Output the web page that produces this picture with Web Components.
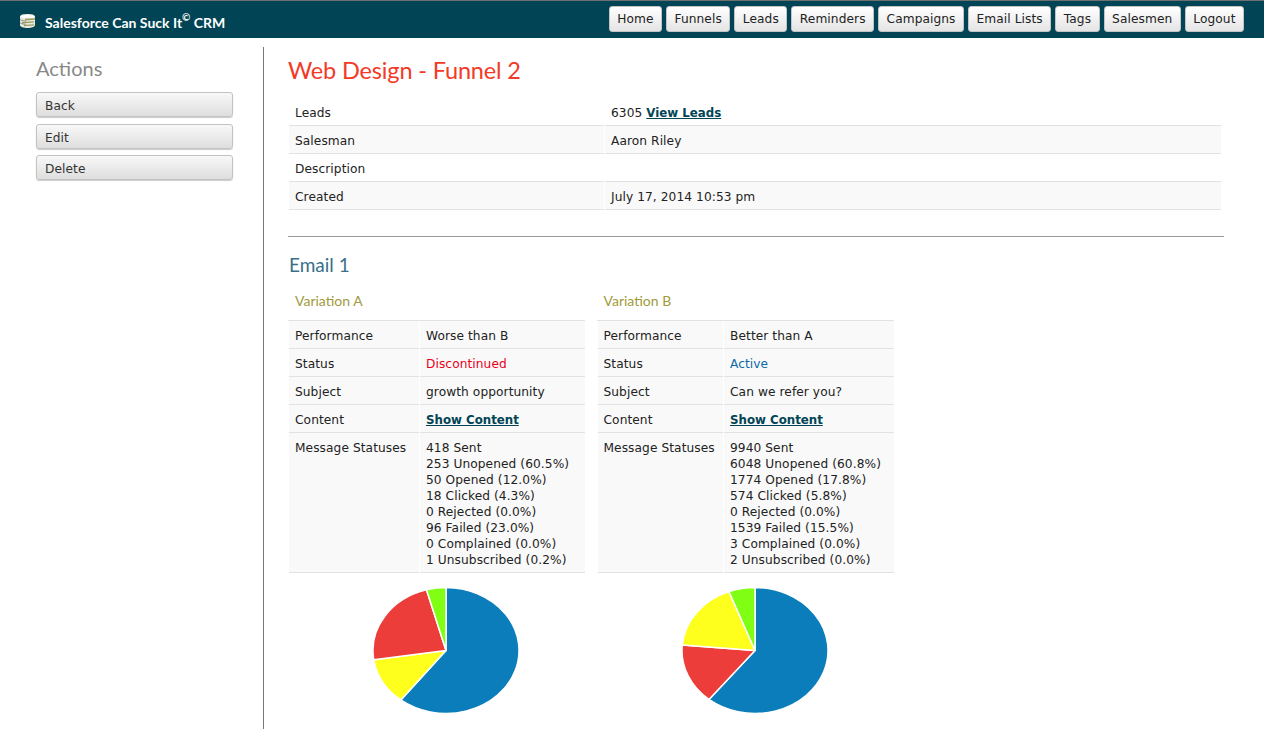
<!DOCTYPE html>
<html>
<head>
<meta charset="utf-8">
<title>Web Design - Funnel 2</title>
<style>
    html, body { height: 100%; margin: 0; overflow: hidden; }
    body { background: #fff; color: #222; font-family: "DejaVu Sans", sans-serif; font-size: 12.2px; letter-spacing: .08px; }
</style>
</head>
<body>
<crm-app>
    <crm-header slot="header" brand="Salesforce Can Suck It">
        <crm-button>Home</crm-button>
        <crm-button>Funnels</crm-button>
        <crm-button>Leads</crm-button>
        <crm-button>Reminders</crm-button>
        <crm-button>Campaigns</crm-button>
        <crm-button>Email Lists</crm-button>
        <crm-button>Tags</crm-button>
        <crm-button>Salesmen</crm-button>
        <crm-button>Logout</crm-button>
    </crm-header>
    <crm-sidebar slot="sidebar" title="Actions">
        <crm-action>Back</crm-action>
        <crm-action>Edit</crm-action>
        <crm-action>Delete</crm-action>
    </crm-sidebar>
    <crm-funnel title="Web Design - Funnel 2">
        <crm-row label="Leads" slot="info" width="315">6305 <crm-link>View Leads</crm-link></crm-row>
        <crm-row label="Salesman" slot="info" width="315" shaded>Aaron Riley</crm-row>
        <crm-row label="Description" slot="info" width="315"></crm-row>
        <crm-row label="Created" slot="info" width="315" shaded>July 17, 2014 10:53 pm</crm-row>
        <crm-variation slot="variations" title="Variation A" data="60.5,#0b7dbb 12,#ffff1e 23,#ec3d3b 4.3,#80ff14">
            <crm-row label="Performance" width="130" shaded>Worse than B</crm-row>
            <crm-row label="Status" width="130" shaded><span style="color:#e8001c">Discontinued</span></crm-row>
            <crm-row label="Subject" width="130" shaded>growth opportunity</crm-row>
            <crm-row label="Content" width="130" shaded><crm-link>Show Content</crm-link></crm-row>
            <crm-row label="Message Statuses" width="130" shaded>418 Sent<br>253 Unopened (60.5%)<br>50 Opened (12.0%)<br>18 Clicked (4.3%)<br>0 Rejected (0.0%)<br>96 Failed (23.0%)<br>0 Complained (0.0%)<br>1 Unsubscribed (0.2%)</crm-row>
        </crm-variation>
        <crm-variation slot="variations" title="Variation B" data="60.8,#0b7dbb 15.5,#ec3d3b 17.8,#ffff1e 5.8,#80ff14">
            <crm-row label="Performance" width="125.500" shaded>Better than A</crm-row>
            <crm-row label="Status" width="125.500" shaded><span style="color:#0b6aa8">Active</span></crm-row>
            <crm-row label="Subject" width="125.500" shaded>Can we refer you?</crm-row>
            <crm-row label="Content" width="125.500" shaded><crm-link>Show Content</crm-link></crm-row>
            <crm-row label="Message Statuses" width="125.500" shaded>9940 Sent<br>6048 Unopened (60.8%)<br>1774 Opened (17.8%)<br>574 Clicked (5.8%)<br>0 Rejected (0.0%)<br>1539 Failed (15.5%)<br>3 Complained (0.0%)<br>2 Unsubscribed (0.0%)</crm-row>
        </crm-variation>
    </crm-funnel>
</crm-app>

<script>
const headingFont = `Lato, "Open Sans", sans-serif`;

// small helper, every element just sets its html once
class Base extends HTMLElement {
    constructor() {
        super();
        this.attachShadow({ mode: "open" });
    }
    connectedCallback() {
        this.shadowRoot.innerHTML = this.html();
    }
}

class CrmApp extends Base {
    html() {
        return `<style>
            :host { display: flex; flex-direction: column; height: 100vh; }
            .body { display: flex; flex: 1; min-height: 0; padding-top: 9px; }
            main { flex: 1; min-width: 0; }
        </style>
        <slot name="header"></slot>
        <div class="body">
            <slot name="sidebar"></slot>
            <main><slot></slot></main>
        </div>`;
    }
}

class CrmHeader extends Base {
    html() {
        return `<style>
            :host { display: flex; align-items: center; justify-content: space-between; box-sizing: border-box; height: 38px; padding: 0 20px 0 19px; background: #004455; border-top: 1px solid #6f6f6f; }
            .brand { display: flex; align-items: center; color: #fff; font: 700 14px ${headingFont}; letter-spacing: 0; }
            svg { margin: 2px 9px 0 0; }
            span { padding-top: 6px; }
            sup { font-size: 10px; line-height: 0; position: relative; top: -1px; vertical-align: super; }
            nav { display: flex; gap: 4px; }
        </style>
        <div class="brand">
            <svg width="17" height="16" viewBox="0 0 17 16">
                <path d="M1 3.500C1 1.800 4.500 1 8.500 1S16 1.800 16 3.500V12C16 14 12.500 15 8.500 15S1 14 1 12Z" fill="#e9e9df"/>
                <path d="M1 3.500C3 5.500 13 5.500 16 3.500C13 1.500 3 1.500 1 3.500Z" fill="#fff"/>
                <path d="M6 5.800 16 5.200V6.800L6 7.500ZM3 9 15 8.300V9.500L3 10.500ZM5 12 15 11.200V12.400L5 13.300Z" fill="#9c9f5e"/>
                <path d="M1 6.500C3 8 5 8 7 8M1 9.800C3 11 5 11.300 7 11.300" stroke="#6d7a73" stroke-width=".8" fill="none"/>
            </svg>
            <span>${this.getAttribute("brand")}<sup>©</sup> CRM</span>
        </div>
        <nav><slot></slot></nav>`;
    }
}

class CrmButton extends Base {
    html() {
        return `<style>
            :host { display: block; }
            a { display: block; box-sizing: border-box; height: 26px; line-height: 24px; padding: 0 7.500px; margin-top: -1px; color: #222; font-size: 12.200px; border: 1px solid #c4c4c4; border-radius: 3px; background: linear-gradient(#fff, #e4e4e4); }
        </style>
        <a><slot></slot></a>`;
    }
}

class CrmSidebar extends Base {
    html() {
        return `<style>
            :host { display: block; box-sizing: border-box; width: 264px; height: 100%; padding: 8px 30px 0 36px; border-right: 1px solid #777; }
            h2 { margin: 0 0 11px; color: #888; font: 400 20px/26px ${headingFont}; letter-spacing: 0; }
            .list { display: flex; flex-direction: column; gap: 6.500px; }
        </style>
        <h2>${this.getAttribute("title")}</h2>
        <div class="list"><slot></slot></div>`;
    }
}

class CrmAction extends Base {
    html() {
        return `<style>
            :host { display: block; }
            a { display: block; box-sizing: border-box; height: 25px; line-height: 24px; padding: 1px 8px 0; color: #333; border: 1px solid #c2c2c2; border-radius: 3px; background: linear-gradient(#f8f8f8, #dedede); box-shadow: 0 1px 1px rgba(0,0,0,.2); }
        </style>
        <a><slot></slot></a>`;
    }
}

class CrmFunnel extends Base {
    html() {
        return `<style>
            :host { display: block; padding: 8px 40px 0 24px; }
            h1 { margin: 0 0 13px; color: #f33a26; font: 400 23.500px/30px ${headingFont}; letter-spacing: -.15px; }
            .info { padding-right: 3px; }
            hr { height: 0; margin: 26px 0 15px; border: 0; border-top: 1px solid #999; }
            h2 { margin: 0 0 11px 1px; color: #3a6f8a; font: 400 19px/26px ${headingFont}; letter-spacing: 0; }
            .variations { display: flex; gap: 11.500px; }
        </style>
        <h1>${this.getAttribute("title")}</h1>
        <div class="info"><slot name="info"></slot></div>
        <hr>
        <h2>Email 1</h2>
        <div class="variations"><slot name="variations"></slot></div>`;
    }
}

class CrmRow extends Base {
    html() {
        return `<style>
            :host { display: flex; margin-left: 1px; line-height: 16px; }
            div { box-sizing: border-box; padding: 7px 6px 4px; border-bottom: 1px solid #e2e2e2; min-height: 28px; }
            .label { flex: none; width: ${this.getAttribute("width")}px; margin-right: 1px; }
            .value { flex: 1; min-width: 0; }
            :host([shaded]) div { background: #f9f9f9; }
        </style>
        <div class="label">${this.getAttribute("label")}</div>
        <div class="value"><slot></slot></div>`;
    }
}

class CrmLink extends Base {
    html() {
        return `<style>
            :host { display: inline; }
            a { color: #004455; font-size: 11.800px; font-weight: 700; letter-spacing: 0; text-decoration: underline; }
        </style>
        <a><slot></slot></a>`;
    }
}

class CrmVariation extends Base {
    html() {
        return `<style>
            :host { display: block; width: 297px; }
            h3 { margin: 0; height: 31px; padding: 4px 0 0 7px; color: #a19a3c; font: 400 14px/16px ${headingFont}; letter-spacing: 0; box-sizing: border-box; }
            .rows { border-top: 1px solid #e2e2e2; }
            crm-pie { margin-top: 14px; }
        </style>
        <h3>${this.getAttribute("title")}</h3>
        <div class="rows"><slot></slot></div>
        <crm-pie data="${this.getAttribute("data")}"></crm-pie>`;
    }
}

// pie was a canvas stretched sideways in the original, so compute on an ellipse
class CrmPie extends Base {
    html() {
        const rx = 73, ry = 63, cx = 74, cy = 63.500;
        const parts = this.getAttribute("data").split(" ").map(p => p.split(","));
        const total = parts.reduce((sum, p) => sum + parseFloat(p[0]), 0);
        let angle = 0;
        const slices = parts.map(([value, color]) => {
            const start = angle;
            angle += parseFloat(value) / total * Math.PI * 2;
            const point = a => `${(cx + rx * Math.sin(a)).toFixed(2)} ${(cy - ry * Math.cos(a)).toFixed(2)}`;
            const large = angle - start > Math.PI ? 1 : 0;
            return `<path d="M${cx} ${cy}L${point(start)}A${rx} ${ry} 0 ${large} 1 ${point(angle)}Z" fill="${color}"/>`;
        }).join("");
        return `<style>
            :host { display: block; }
            svg { display: block; margin-left: 84px; }
            path { stroke: #fff; stroke-width: 1.500; stroke-linejoin: round; }
        </style>
        <svg width="148" height="128" viewBox="0 0 148 128">${slices}</svg>`;
    }
}

customElements.define("crm-app", CrmApp);
customElements.define("crm-header", CrmHeader);
customElements.define("crm-button", CrmButton);
customElements.define("crm-sidebar", CrmSidebar);
customElements.define("crm-action", CrmAction);
customElements.define("crm-funnel", CrmFunnel);
customElements.define("crm-row", CrmRow);
customElements.define("crm-link", CrmLink);
customElements.define("crm-variation", CrmVariation);
customElements.define("crm-pie", CrmPie);
</script>
</body>
</html>
